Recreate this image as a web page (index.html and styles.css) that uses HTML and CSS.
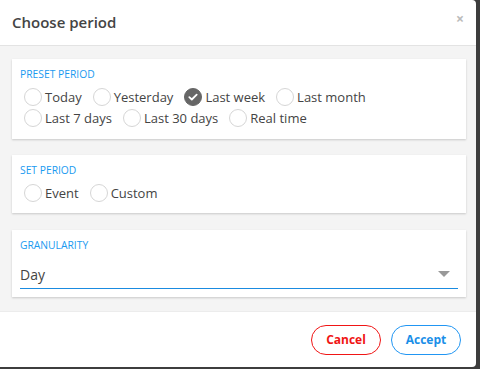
FILE: index.html
```html
<!DOCTYPE html>
<html>
<head>
<meta charset="utf-8">
<link rel="stylesheet" href="styles.css">
</head>
<body>
<div class="dialog">
  <div class="header">
    <span class="title">Choose period</span>
    <span class="close">×</span>
  </div>
  <div class="content">
    <div class="card card-preset">
      <div class="label">PRESET PERIOD</div>
      <div class="radios">
        <div class="radio"><span class="circle"></span><span>Today</span></div>
        <div class="radio"><span class="circle"></span><span>Yesterday</span></div>
        <div class="radio"><span class="circle checked"><svg width="10" height="8" viewBox="0 0 10 8"><path d="M1.3 4.2 L3.8 6.5 L8.7 1.6" fill="none" stroke="#fff" stroke-width="1.8" stroke-linecap="round" stroke-linejoin="round"/></svg></span><span>Last week</span></div>
        <div class="radio"><span class="circle"></span><span>Last month</span></div>
      </div>
      <div class="radios">
        <div class="radio"><span class="circle"></span><span>Last 7 days</span></div>
        <div class="radio"><span class="circle"></span><span>Last 30 days</span></div>
        <div class="radio"><span class="circle"></span><span>Real time</span></div>
      </div>
    </div>
    <div class="card card-set">
      <div class="label">SET PERIOD</div>
      <div class="radios">
        <div class="radio"><span class="circle"></span><span>Event</span></div>
        <div class="radio"><span class="circle"></span><span>Custom</span></div>
      </div>
    </div>
    <div class="card card-gran">
      <div class="label">GRANULARITY</div>
      <div class="select">
        <span class="value">Day</span>
        <span class="arrow"></span>
      </div>
    </div>
  </div>
  <div class="footer">
    <button class="btn btn-cancel">Cancel</button>
    <button class="btn btn-accept">Accept</button>
  </div>
</div>
</body>
</html>
```
FILE: styles.css
```css
html, body {
  margin: 0;
  padding: 0;
}
body {
  background: #3d3d3d;
  width: 480px;
  height: 369px;
  overflow: hidden;
  font-family: "Open Sans", "Noto Sans", sans-serif;
}
.dialog {
  width: 476px;
  height: 367px;
  background: #fff;
  border-radius: 0 4px 4px 0;
  display: flex;
  flex-direction: column;
  overflow: hidden;
}
.header {
  height: 45px;
  border-bottom: 1px solid #e3e3e3;
  display: flex;
  align-items: center;
  justify-content: space-between;
  padding: 0 12px;
  flex: none;
}
.title {
  font-size: 15px;
  font-weight: 600;
  color: #444;
  margin-top: -1px;
}
.close {
  font-size: 14px;
  color: #bbb;
  font-weight: 700;
  margin-top: -9px;
}
.content {
  background: #f4f4f4;
  padding: 13px 10px 0 12px;
  height: 266px;
  box-sizing: border-box;
  flex: none;
  border-bottom: 1px solid #ececec;
}
.card {
  background: #fff;
  box-shadow: 0 1px 2px rgba(0,0,0,0.18);
  padding: 9px 8px 0 8px;
  box-sizing: border-box;
}
.card-preset { height: 80px; }
.card-set { height: 58px; margin-top: 16px; }
.card-gran { height: 67px; margin-top: 17px; }
.label {
  font-size: 10.3px;
  line-height: 12px;
  color: #1a9af0;
}
.radios {
  display: flex;
  gap: 11px;
  padding-left: 4px;
  height: 21px;
  align-items: center;
}
.card-preset .label { margin-bottom: 6px; }
.card-set .label { margin-bottom: 6px; }
.radio {
  display: flex;
  align-items: center;
  gap: 3px;
  font-size: 13px;
  color: #444;
}
.circle {
  width: 16px;
  height: 16px;
  border: 1px solid #d6d6d6;
  border-radius: 50%;
  display: flex;
  align-items: center;
  justify-content: center;
  background: #fff;
}
.circle.checked {
  background: #666;
  border-color: #666;
}
.select {
  margin-top: 12px;
  height: 26px;
  border-bottom: 1.5px solid #1a8be0;
  display: flex;
  align-items: center;
  justify-content: space-between;
  box-sizing: border-box;
}
.value {
  font-size: 14px;
  color: #444;
  margin-top: -2px;
}
.arrow {
  width: 0;
  height: 0;
  border-left: 6.5px solid transparent;
  border-right: 6.5px solid transparent;
  border-top: 6px solid #999;
  margin-right: 8px;
  margin-top: -4px;
}
.footer {
  flex: 1;
  display: flex;
  align-items: center;
  justify-content: flex-end;
  gap: 10px;
  padding-right: 15px;
}
.btn {
  width: 70px;
  height: 30px;
  border-radius: 15px;
  background: #fff;
  font-family: "Open Sans", "Noto Sans", sans-serif;
  font-size: 12px;
  font-weight: 700;
  cursor: pointer;
  padding: 0;
}
.btn-cancel {
  border: 1px solid #f01515;
  color: #f01515;
}
.btn-accept {
  border: 1px solid #2196f3;
  color: #1a8fe8;
}
```
